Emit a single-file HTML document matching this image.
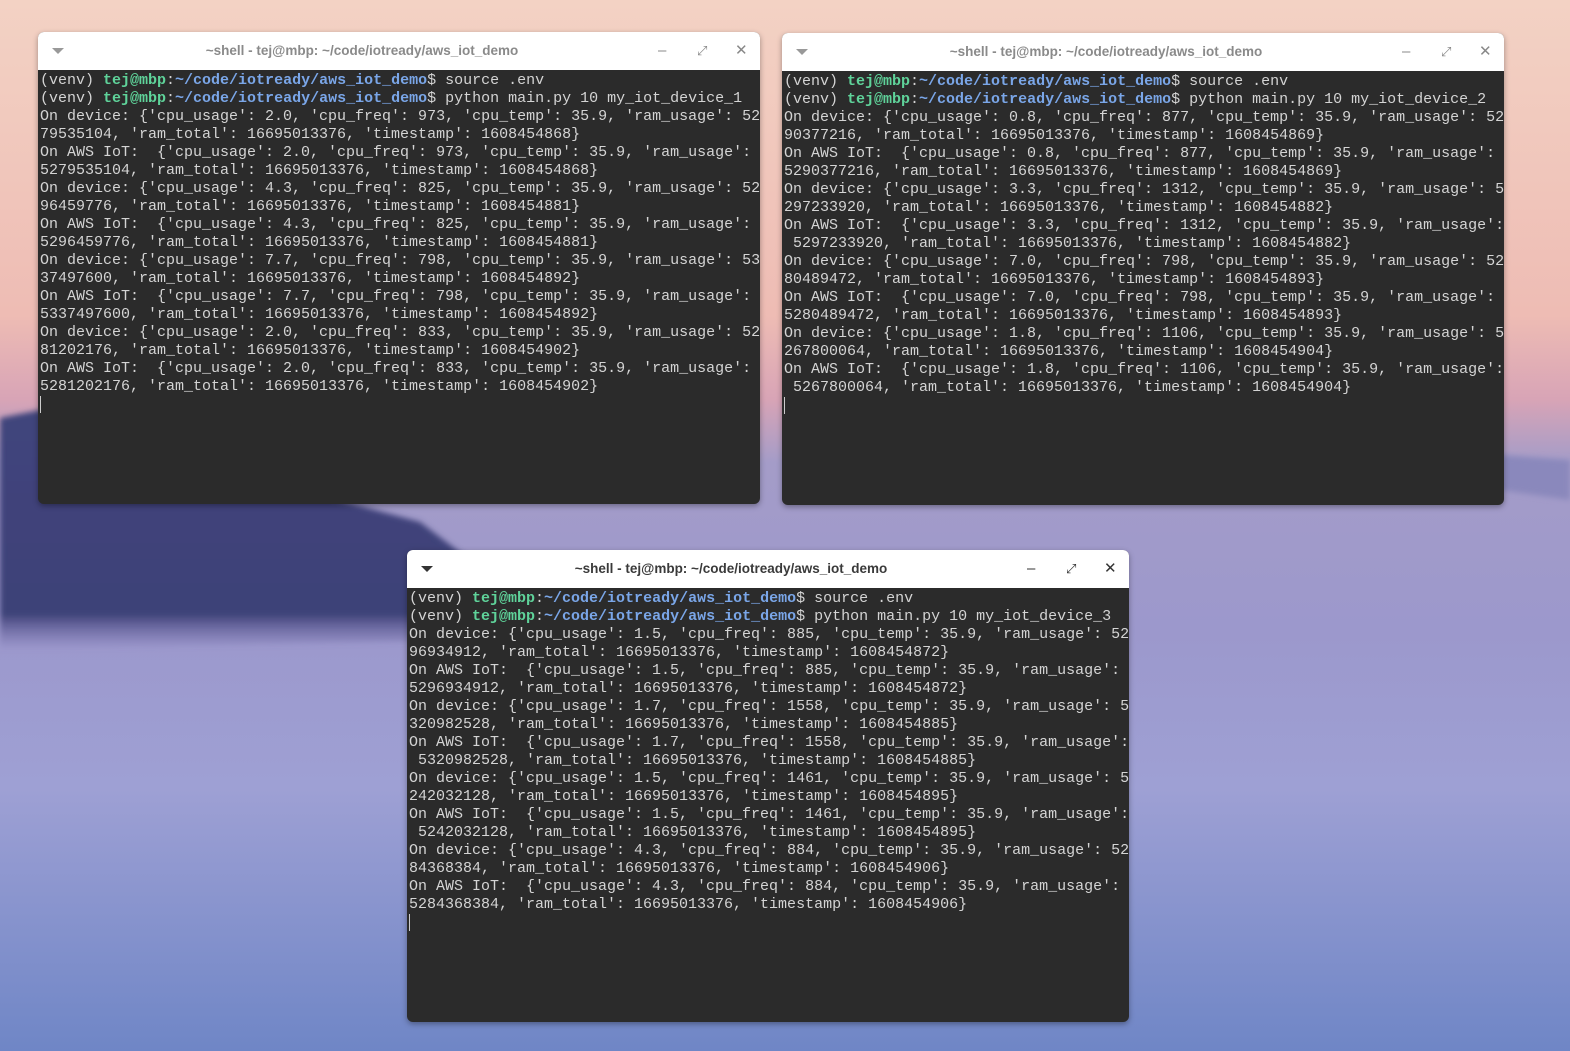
<!DOCTYPE html>
<html><head><meta charset="utf-8"><style>
html,body{margin:0;padding:0;width:1570px;height:1051px;overflow:hidden}
body{position:relative;font-family:"Liberation Sans",sans-serif}
.bg{position:absolute;left:0;top:0}
.win{position:absolute;width:722px;height:472px;background:#2b2b2b;border-radius:6px;overflow:hidden;box-shadow:0 2px 6px rgba(0,0,0,.35)}
.tb{height:38px;background:#fff;position:relative}
.tt{position:absolute;left:0;right:74px;top:0;line-height:38px;text-align:center;font-size:13.5px;font-weight:bold;color:#8a8a8a}
.act .tt{color:#3a3a3a}
.tri{position:absolute;left:14px;top:16px;width:0;height:0;border-left:6px solid transparent;border-right:6px solid transparent;border-top:6px solid #999}
.act .tri{border-top-color:#333}
.ic{position:absolute;top:0;line-height:38px;font-size:15px;color:#888}
.act .ic{color:#333}
pre{margin:0;padding:2px 0 0 2px;font-family:"Liberation Mono",monospace;font-size:15px;line-height:18px;color:#d4d4d4;white-space:pre}
.g{color:#5fd39a;font-weight:bold}.b{color:#7aa6e8;font-weight:bold}
.cur{display:inline-block;width:1px;height:17px;background:#ccc;vertical-align:top}
</style></head><body>
<svg class="bg" width="1570" height="1051" viewBox="0 0 1570 1051">
<defs>
<linearGradient id="sky" x1="0" y1="0" x2="0" y2="1">
<stop offset="0" stop-color="#f3d2c4"/><stop offset=".3" stop-color="#eebcb4"/><stop offset=".38" stop-color="#d8a4b6"/><stop offset=".44" stop-color="#a49cc8"/><stop offset=".6" stop-color="#9c98cc"/><stop offset=".75" stop-color="#9ea0d4"/><stop offset="1" stop-color="#6f86c6"/>
</linearGradient>
<linearGradient id="hill" x1="0" y1="0" x2="0" y2="1">
<stop offset="0" stop-color="#40447c"/><stop offset=".85" stop-color="#3e4278"/><stop offset="1" stop-color="#6a62a0" stop-opacity="0"/>
</linearGradient>
<filter id="bl" x="-10%" y="-10%" width="120%" height="120%"><feGaussianBlur stdDeviation="3"/></filter>
</defs>
<rect width="1570" height="1051" fill="url(#sky)"/>
<path d="M0 418 L40 410 L120 428 L260 478 L330 498 L420 522 L470 560 L490 640 L0 650Z" fill="url(#hill)" filter="url(#bl)"/>
<path d="M1500 455 L1570 460 L1570 500 L1500 490Z" fill="#8a88bc" filter="url(#bl)"/>
</svg>

<div class="win" style="left:38px;top:32px">
<div class="tb"><div class="tri"></div><div class="tt">~shell - tej@mbp: ~/code/iotready/aws_iot_demo</div>
<span class="ic" style="left:620px">–</span><span class="ic" style="left:659px;font-size:13px">⤢</span><span class="ic" style="left:697px">✕</span></div>
<pre>(venv) <span class="g">tej@mbp</span>:<span class="b">~/code/iotready/aws_iot_demo</span>$ source .env
(venv) <span class="g">tej@mbp</span>:<span class="b">~/code/iotready/aws_iot_demo</span>$ python main.py 10 my_iot_device_1
On device: {'cpu_usage': 2.0, 'cpu_freq': 973, 'cpu_temp': 35.9, 'ram_usage': 52
79535104, 'ram_total': 16695013376, 'timestamp': 1608454868}
On AWS IoT:  {'cpu_usage': 2.0, 'cpu_freq': 973, 'cpu_temp': 35.9, 'ram_usage':
5279535104, 'ram_total': 16695013376, 'timestamp': 1608454868}
On device: {'cpu_usage': 4.3, 'cpu_freq': 825, 'cpu_temp': 35.9, 'ram_usage': 52
96459776, 'ram_total': 16695013376, 'timestamp': 1608454881}
On AWS IoT:  {'cpu_usage': 4.3, 'cpu_freq': 825, 'cpu_temp': 35.9, 'ram_usage':
5296459776, 'ram_total': 16695013376, 'timestamp': 1608454881}
On device: {'cpu_usage': 7.7, 'cpu_freq': 798, 'cpu_temp': 35.9, 'ram_usage': 53
37497600, 'ram_total': 16695013376, 'timestamp': 1608454892}
On AWS IoT:  {'cpu_usage': 7.7, 'cpu_freq': 798, 'cpu_temp': 35.9, 'ram_usage':
5337497600, 'ram_total': 16695013376, 'timestamp': 1608454892}
On device: {'cpu_usage': 2.0, 'cpu_freq': 833, 'cpu_temp': 35.9, 'ram_usage': 52
81202176, 'ram_total': 16695013376, 'timestamp': 1608454902}
On AWS IoT:  {'cpu_usage': 2.0, 'cpu_freq': 833, 'cpu_temp': 35.9, 'ram_usage':
5281202176, 'ram_total': 16695013376, 'timestamp': 1608454902}
<span class="cur"></span></pre>
</div>

<div class="win" style="left:782px;top:33px">
<div class="tb"><div class="tri"></div><div class="tt">~shell - tej@mbp: ~/code/iotready/aws_iot_demo</div>
<span class="ic" style="left:620px">–</span><span class="ic" style="left:659px;font-size:13px">⤢</span><span class="ic" style="left:697px">✕</span></div>
<pre>(venv) <span class="g">tej@mbp</span>:<span class="b">~/code/iotready/aws_iot_demo</span>$ source .env
(venv) <span class="g">tej@mbp</span>:<span class="b">~/code/iotready/aws_iot_demo</span>$ python main.py 10 my_iot_device_2
On device: {'cpu_usage': 0.8, 'cpu_freq': 877, 'cpu_temp': 35.9, 'ram_usage': 52
90377216, 'ram_total': 16695013376, 'timestamp': 1608454869}
On AWS IoT:  {'cpu_usage': 0.8, 'cpu_freq': 877, 'cpu_temp': 35.9, 'ram_usage':
5290377216, 'ram_total': 16695013376, 'timestamp': 1608454869}
On device: {'cpu_usage': 3.3, 'cpu_freq': 1312, 'cpu_temp': 35.9, 'ram_usage': 5
297233920, 'ram_total': 16695013376, 'timestamp': 1608454882}
On AWS IoT:  {'cpu_usage': 3.3, 'cpu_freq': 1312, 'cpu_temp': 35.9, 'ram_usage':
 5297233920, 'ram_total': 16695013376, 'timestamp': 1608454882}
On device: {'cpu_usage': 7.0, 'cpu_freq': 798, 'cpu_temp': 35.9, 'ram_usage': 52
80489472, 'ram_total': 16695013376, 'timestamp': 1608454893}
On AWS IoT:  {'cpu_usage': 7.0, 'cpu_freq': 798, 'cpu_temp': 35.9, 'ram_usage':
5280489472, 'ram_total': 16695013376, 'timestamp': 1608454893}
On device: {'cpu_usage': 1.8, 'cpu_freq': 1106, 'cpu_temp': 35.9, 'ram_usage': 5
267800064, 'ram_total': 16695013376, 'timestamp': 1608454904}
On AWS IoT:  {'cpu_usage': 1.8, 'cpu_freq': 1106, 'cpu_temp': 35.9, 'ram_usage':
 5267800064, 'ram_total': 16695013376, 'timestamp': 1608454904}
<span class="cur"></span></pre>
</div>

<div class="win act" style="left:407px;top:550px">
<div class="tb"><div class="tri"></div><div class="tt">~shell - tej@mbp: ~/code/iotready/aws_iot_demo</div>
<span class="ic" style="left:620px">–</span><span class="ic" style="left:659px;font-size:13px">⤢</span><span class="ic" style="left:697px">✕</span></div>
<pre>(venv) <span class="g">tej@mbp</span>:<span class="b">~/code/iotready/aws_iot_demo</span>$ source .env
(venv) <span class="g">tej@mbp</span>:<span class="b">~/code/iotready/aws_iot_demo</span>$ python main.py 10 my_iot_device_3
On device: {'cpu_usage': 1.5, 'cpu_freq': 885, 'cpu_temp': 35.9, 'ram_usage': 52
96934912, 'ram_total': 16695013376, 'timestamp': 1608454872}
On AWS IoT:  {'cpu_usage': 1.5, 'cpu_freq': 885, 'cpu_temp': 35.9, 'ram_usage':
5296934912, 'ram_total': 16695013376, 'timestamp': 1608454872}
On device: {'cpu_usage': 1.7, 'cpu_freq': 1558, 'cpu_temp': 35.9, 'ram_usage': 5
320982528, 'ram_total': 16695013376, 'timestamp': 1608454885}
On AWS IoT:  {'cpu_usage': 1.7, 'cpu_freq': 1558, 'cpu_temp': 35.9, 'ram_usage':
 5320982528, 'ram_total': 16695013376, 'timestamp': 1608454885}
On device: {'cpu_usage': 1.5, 'cpu_freq': 1461, 'cpu_temp': 35.9, 'ram_usage': 5
242032128, 'ram_total': 16695013376, 'timestamp': 1608454895}
On AWS IoT:  {'cpu_usage': 1.5, 'cpu_freq': 1461, 'cpu_temp': 35.9, 'ram_usage':
 5242032128, 'ram_total': 16695013376, 'timestamp': 1608454895}
On device: {'cpu_usage': 4.3, 'cpu_freq': 884, 'cpu_temp': 35.9, 'ram_usage': 52
84368384, 'ram_total': 16695013376, 'timestamp': 1608454906}
On AWS IoT:  {'cpu_usage': 4.3, 'cpu_freq': 884, 'cpu_temp': 35.9, 'ram_usage':
5284368384, 'ram_total': 16695013376, 'timestamp': 1608454906}
<span class="cur"></span></pre>
</div>
</body></html>
